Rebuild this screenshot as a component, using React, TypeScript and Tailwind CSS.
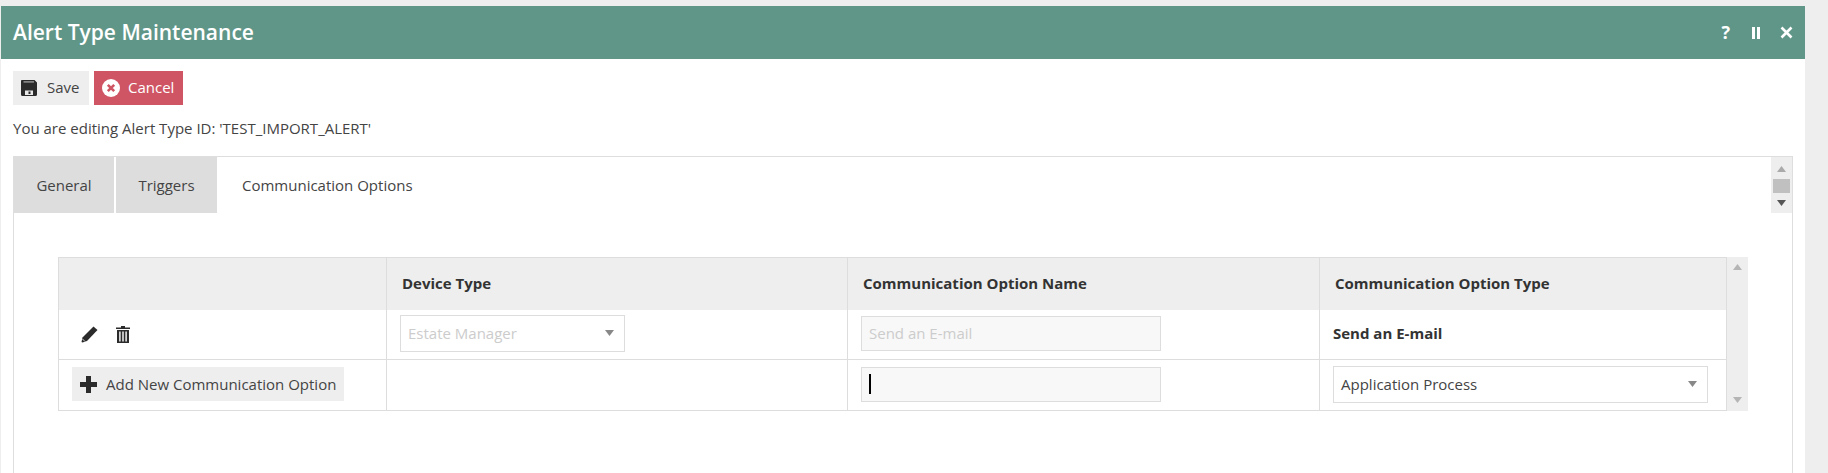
import React from 'react';

const font = { fontFamily: '"Open Sans", sans-serif' };

const SaveIcon = () => (
    <svg width="18" height="18" viewBox="0 0 18 18" className="shrink-0">
        <path d="M1.5 1h13L17 3.5V15.5a1.5 1.5 0 0 1-1.5 1.5h-13A1.5 1.5 0 0 1 1 15.5v-13A1.5 1.5 0 0 1 1.5 1z" fill="#2b2b2b" />
        <rect x="3.5" y="2.2" width="10.5" height="1.4" fill="#9a9a9a" />
        <rect x="5" y="11.5" width="8" height="4.5" fill="#e8e8e8" />
        <rect x="8.5" y="12.5" width="2" height="2.5" fill="#2b2b2b" />
    </svg>
);

const CancelIcon = () => (
    <svg width="18" height="18" viewBox="0 0 18 18" className="shrink-0">
        <circle cx="9" cy="9" r="9" fill="#fff" />
        <path d="M5.8 5.8l6.4 6.4M12.2 5.8l-6.4 6.4" stroke="#cf5564" strokeWidth="2.6" />
    </svg>
);

const PencilIcon = () => (
    <svg width="17" height="17" viewBox="0 0 17 17">
        <path d="M12.5 0.5l4 3.5L6 15 1.5 16.5 0.5 16l1-4.5z" fill="#2b2b2b" />
        <path d="M1.5 13l2.5 2.5" stroke="#fff" strokeWidth="0.8" />
    </svg>
);

const TrashIcon = () => (
    <svg width="14" height="17" viewBox="0 0 14 17">
        <path d="M5 0h4v1.5h5V3H0V1.5h5z" fill="#2b2b2b" />
        <path fillRule="evenodd" d="M1 4h12v13H1zM3.2 5.5v10h1.4v-10zM6.3 5.5v10h1.4v-10zM9.4 5.5v10h1.4v-10z" fill="#2b2b2b" />
    </svg>
);

const PlusIcon = () => (
    <svg width="17" height="17" viewBox="0 0 17 17" className="shrink-0">
        <path d="M6 0h5v6h6v5h-6v6H6v-6H0V6h6z" fill="#2b2b2b" />
    </svg>
);

const Arrow = ({ down, color }: { down?: boolean; color: string }) => (
    <svg width="9" height="6" viewBox="0 0 9 6" className="block">
        <path d={down ? 'M0 0h9L4.5 6z' : 'M4.5 0L9 6H0z'} fill={color} />
    </svg>
);

const Select = ({ value, className, textClass }: { value: string; className: string; textClass: string }) => (
    <div className={`flex h-[37px] items-center justify-between border border-[#dddddd] bg-white pl-[7px] pr-[10px] text-[15px] ${className} ${textClass}`}>
        <span>{value}</span>
        <Arrow down color="#888" />
    </div>
);

const App: React.FC = () => {
    return (
        <div className="h-[473px] w-full overflow-hidden bg-[#eeeeee] pl-px pt-[6px]" style={font}>
            <div className="flex h-[467px] w-[1804px] flex-col bg-white text-[15px] text-[#444]">
                {/* Title bar */}
                <div className="flex h-[53px] shrink-0 items-center justify-between bg-[#609688] pl-3 pr-[12px] text-white">
                    <h1 className="text-[21px] font-semibold">Alert Type Maintenance</h1>
                    <div className="flex items-center">
                        <span className="mb-[2px] mr-[22px] text-[18px] font-bold leading-none">?</span>
                        <svg width="8" height="12" viewBox="0 0 8 12" className="mr-[20px]">
                            <path d="M0 0h3v12H0zM5 0h3v12H5z" fill="#fff" />
                        </svg>
                        <svg width="13" height="13" viewBox="0 0 13 13">
                            <path d="M1.5 1.5l10 10M11.5 1.5l-10 10" stroke="#fff" strokeWidth="2.6" />
                        </svg>
                    </div>
                </div>

                {/* Toolbar */}
                <div className="ml-3 mt-3 flex gap-[5px]">
                    <button className="flex h-[34px] w-[76px] items-center gap-[9px] bg-[#eeeeee] pb-[1px] pl-[7px] text-[15px] text-[#444]">
                        <SaveIcon />
                        Save
                    </button>
                    <button className="flex h-[34px] w-[89px] items-center gap-2 bg-[#cf5564] pb-[1px] pl-2 text-[15px] text-white">
                        <CancelIcon />
                        Cancel
                    </button>
                </div>

                <p className="ml-3 mt-[13px] h-[20px] leading-[20px]">You are editing Alert Type ID: 'TEST_IMPORT_ALERT'</p>

                {/* Tab panel */}
                <div className="ml-3 mt-[18px] w-[1780px] flex-1 border-l border-r border-t border-[#dedede]">
                    <div className="flex h-[56px] items-stretch">
                        <div className="flex w-[100px] items-center justify-center bg-[#dddddd]">General</div>
                        <div className="ml-[2px] flex w-[101px] items-center justify-center bg-[#dddddd]">Triggers</div>
                        <div className="flex flex-1 items-center pl-[25px]">Communication Options</div>
                        <div className="flex w-[21px] flex-col items-center bg-[#eeeeee] pt-[9px]">
                            <Arrow color="#aaa" />
                            <div className="mt-[7px] h-[14px] w-[17px] bg-[#c0c0c0]" />
                            <div className="mt-[7px]">
                                <Arrow down color="#555" />
                            </div>
                        </div>
                    </div>

                    {/* Options grid */}
                    <div className="ml-[44px] mt-[44px] flex items-start">
                        <table className="w-[1668px] table-fixed border-collapse border border-[#dddddd]">
                            <colgroup>
                                <col className="w-[328px]" />
                                <col className="w-[461px]" />
                                <col className="w-[472px]" />
                                <col className="w-[407px]" />
                            </colgroup>
                            <thead>
                                <tr className="h-[52px] bg-[#eeeeee] text-left text-[15px] font-bold text-[#333]">
                                    <th className="border-r border-[#dddddd]" />
                                    <th className="border-r border-[#dddddd] pb-[2px] pl-[15px] font-bold">Device Type</th>
                                    <th className="border-r border-[#dddddd] pb-[2px] pl-[15px] font-bold">Communication Option Name</th>
                                    <th className="pb-[2px] pl-[15px] font-bold">Communication Option Type</th>
                                </tr>
                            </thead>
                            <tbody>
                                <tr className="h-[50px] border-b border-[#dddddd]">
                                    <td className="border-r border-[#dddddd] pl-[22px]">
                                        <div className="flex items-center gap-[18px]">
                                            <PencilIcon />
                                            <TrashIcon />
                                        </div>
                                    </td>
                                    <td className="border-r border-[#dddddd] pb-[2px] pl-[13px]">
                                        <Select value="Estate Manager" className="w-[225px]" textClass="text-[#cccccc]" />
                                    </td>
                                    <td className="border-r border-[#dddddd] pb-[2px] pl-[13px]">
                                        <div className="flex h-[35px] w-[300px] items-center border border-[#dddddd] bg-[#f8f8f8] pl-[7px] text-[#cccccc]">Send an E-mail</div>
                                    </td>
                                    <td className="pb-[2px] pl-[13px] font-bold text-[#333]">Send an E-mail</td>
                                </tr>
                                <tr className="h-[51px]">
                                    <td className="border-r border-[#dddddd] pb-[2px] pl-[13px]">
                                        <button className="flex h-[34px] w-[272px] items-center gap-[9px] bg-[#eeeeee] pl-2 text-[15px] text-[#444]">
                                            <PlusIcon />
                                            Add New Communication Option
                                        </button>
                                    </td>
                                    <td className="border-r border-[#dddddd]" />
                                    <td className="border-r border-[#dddddd] pb-[2px] pl-[13px]">
                                        <div className="flex h-[35px] w-[300px] items-center border border-[#dddddd] bg-[#f8f8f8] pl-[7px]">
                                            <span className="h-[20px] w-[2px] bg-black" />
                                        </div>
                                    </td>
                                    <td className="pb-[2px] pl-[13px]">
                                        <Select value="Application Process" className="w-[375px]" textClass="text-[#444]" />
                                    </td>
                                </tr>
                            </tbody>
                        </table>
                        <div className="flex h-[154px] w-[21px] flex-col items-center justify-between bg-[#eeeeee] pb-[8px] pt-[7px]">
                            <Arrow color="#b5b5b5" />
                            <Arrow down color="#b5b5b5" />
                        </div>
                    </div>
                </div>
            </div>
        </div>
    );
};

export default App;
